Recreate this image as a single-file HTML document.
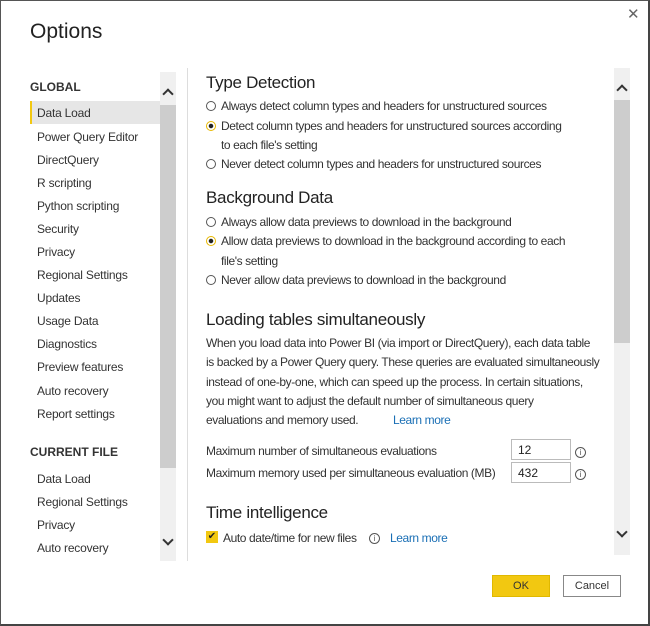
<!DOCTYPE html>
<html><head><meta charset="utf-8"><style>
*{margin:0;padding:0;box-sizing:border-box}
body{width:650px;height:626px;background:#fff;font-family:"Liberation Sans",sans-serif;color:#333;position:relative;overflow:hidden}
.win{position:absolute;left:0;top:0;width:650px;height:626px;border:1px solid #555;border-right:2px solid #444;border-bottom:2px solid #444}
.a{position:absolute;white-space:nowrap;font-size:12px;letter-spacing:-0.4px}
.nav{position:absolute;left:37px;font-size:12px;color:#333;letter-spacing:-0.2px}
.h{position:absolute;left:206px;font-size:17px;color:#222;letter-spacing:-0.3px}
.r{position:absolute;left:206px;width:10px;height:10px;border:1.5px solid #555;border-radius:50%}
.r.on{border-color:#e8b800;background:radial-gradient(circle,#222 0 2px,#fff 2.5px)}
.lm{color:#1a6fb5}
.chev{position:absolute;width:8px;height:8px;border-left:2px solid #333;border-top:2px solid #333}
.box{position:absolute;left:511px;width:60px;height:21px;border:1px solid #bbb;font-size:12px;padding:3px 0 0 6px;color:#222;background:#fff}
.info{position:absolute;left:575px;width:11px;height:11px;border:1px solid #555;border-radius:50%;font-size:8px;text-align:center;line-height:9px;color:#555}
</style></head><body>
<div class="win"></div>
<div class="a" style="left:30px;top:20px;font-size:21px;color:#222;letter-spacing:0">Options</div>
<div class="a" style="left:627px;top:5px;font-size:15px;color:#666;font-weight:300;letter-spacing:0">✕</div>

<div class="a" style="left:30px;top:80px;font-weight:bold;color:#333;letter-spacing:0">GLOBAL</div>
<div style="position:absolute;left:30px;top:101px;width:130px;height:23px;background:#e6e6e6;border-left:2px solid #f2c811"></div>
<div class="nav" style="top:106px">Data Load</div>
<div class="nav" style="top:130px">Power Query Editor</div>
<div class="nav" style="top:153px">DirectQuery</div>
<div class="nav" style="top:176px">R scripting</div>
<div class="nav" style="top:199px">Python scripting</div>
<div class="nav" style="top:222px">Security</div>
<div class="nav" style="top:245px">Privacy</div>
<div class="nav" style="top:268px">Regional Settings</div>
<div class="nav" style="top:291px">Updates</div>
<div class="nav" style="top:314px">Usage Data</div>
<div class="nav" style="top:337px">Diagnostics</div>
<div class="nav" style="top:360px">Preview features</div>
<div class="nav" style="top:384px">Auto recovery</div>
<div class="nav" style="top:407px">Report settings</div>
<div class="a" style="left:30px;top:445px;font-weight:bold;color:#333;letter-spacing:0">CURRENT FILE</div>
<div class="nav" style="top:472px">Data Load</div>
<div class="nav" style="top:495px">Regional Settings</div>
<div class="nav" style="top:518px">Privacy</div>
<div class="nav" style="top:541px">Auto recovery</div>

<div style="position:absolute;left:160px;top:72px;width:16px;height:489px;background:#f0f0f0"></div>
<div style="position:absolute;left:160px;top:105px;width:16px;height:363px;background:#cdcdcd"></div>
<div class="chev" style="left:164px;top:90px;transform:rotate(45deg)"></div>
<div class="chev" style="left:164px;top:536px;transform:rotate(225deg)"></div>
<div style="position:absolute;left:187px;top:68px;width:1px;height:493px;background:#ddd"></div>

<div style="position:absolute;left:614px;top:68px;width:16px;height:487px;background:#f0f0f0"></div>
<div style="position:absolute;left:614px;top:100px;width:16px;height:243px;background:#cdcdcd"></div>
<div class="chev" style="left:618px;top:86px;transform:rotate(45deg)"></div>
<div class="chev" style="left:618px;top:528px;transform:rotate(225deg)"></div>

<div class="h" style="top:73px">Type Detection</div>
<div class="r" style="top:101px"></div><div class="a" style="left:221px;top:99px">Always detect column types and headers for unstructured sources</div>
<div class="r on" style="top:121px"></div><div class="a" style="left:221px;top:119px">Detect column types and headers for unstructured sources according</div>
<div class="a" style="left:221px;top:138px">to each file's setting</div>
<div class="r" style="top:159px"></div><div class="a" style="left:221px;top:157px">Never detect column types and headers for unstructured sources</div>

<div class="h" style="top:188px">Background Data</div>
<div class="r" style="top:217px"></div><div class="a" style="left:221px;top:215px">Always allow data previews to download in the background</div>
<div class="r on" style="top:236px"></div><div class="a" style="left:221px;top:234px">Allow data previews to download in the background according to each</div>
<div class="a" style="left:221px;top:254px">file's setting</div>
<div class="r" style="top:275px"></div><div class="a" style="left:221px;top:273px">Never allow data previews to download in the background</div>

<div class="h" style="top:310px">Loading tables simultaneously</div>
<div class="a" style="left:206px;top:336px">When you load data into Power BI (via import or DirectQuery), each data table</div>
<div class="a" style="left:206px;top:355px">is backed by a Power Query query. These queries are evaluated simultaneously</div>
<div class="a" style="left:206px;top:375px">instead of one-by-one, which can speed up the process. In certain situations,</div>
<div class="a" style="left:206px;top:394px">you might want to adjust the default number of simultaneous query</div>
<div class="a" style="left:206px;top:413px">evaluations and memory used.</div>
<div class="a lm" style="left:393px;top:413px">Learn more</div>

<div class="a" style="left:206px;top:444px">Maximum number of simultaneous evaluations</div>
<div class="box" style="top:439px">12</div><div class="info" style="top:447px">i</div>
<div class="a" style="left:206px;top:466px">Maximum memory used per simultaneous evaluation (MB)</div>
<div class="box" style="top:462px">432</div><div class="info" style="top:469px">i</div>

<div class="h" style="top:503px">Time intelligence</div>
<div style="position:absolute;left:206px;top:531px;width:12px;height:12px;background:#f2c811;color:#222;font-size:10px;line-height:12px;text-align:center">✔</div>
<div class="a" style="left:223px;top:531px">Auto date/time for new files</div>
<div class="info" style="left:369px;top:533px">i</div>
<div class="a lm" style="left:390px;top:531px">Learn more</div>

<div style="position:absolute;left:492px;top:575px;width:58px;height:22px;background:#f2c811;border:1px solid #e0b800;font-size:11px;text-align:center;line-height:20px;color:#333">OK</div>
<div style="position:absolute;left:563px;top:575px;width:58px;height:22px;background:#fff;border:1px solid #888;font-size:11px;text-align:center;line-height:20px;color:#333">Cancel</div>
</body></html>
